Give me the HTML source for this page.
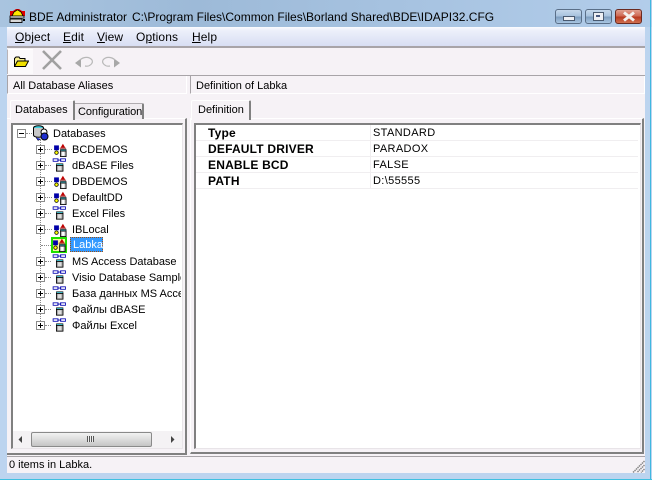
<!DOCTYPE html>
<html><head><meta charset="utf-8"><style>
html,body{margin:0;padding:0}
body{width:652px;height:480px;overflow:hidden;position:relative;font:11px "Liberation Sans","DejaVu Sans",sans-serif;color:#000;background:#bcd4ef}
div,span,svg{position:absolute}
.t{white-space:nowrap;line-height:16px}
.m{font-size:12px;letter-spacing:.1px;line-height:14px}
.tree{left:72px}
.pm{left:36px;width:7px;height:7px;margin-top:1px;border:1px solid #8c8c8c;background:#fff}
.pm:before{content:"";position:absolute;left:1px;top:3px;width:5px;height:1px;background:#000}
.pm.p:after{content:"";position:absolute;left:3px;top:1px;width:1px;height:5px;background:#000}
.dh{height:0;border-top:1px dotted #888}
.b{font-size:12px;font-weight:bold;left:208px;letter-spacing:.2px;line-height:14px}
.v{left:373px;letter-spacing:.35px}
u{text-decoration:underline}
</style></head><body>
<svg width="0" height="0" style="left:0;top:0"><defs>
<g id="a"><rect x="0" y="3" width="6" height="6" fill="#0000a8"/><path d="M8 6 11 1 14 6Z" fill="#c00000"/><rect x="7" y="6" width="8" height="1" fill="#800000"/><circle cx="3" cy="12" r="2.200" fill="#ffff00" stroke="#000" stroke-width="1"/><rect x="8" y="8" width="7" height="2" fill="#50c8d8" stroke="#000" stroke-width=".7"/><rect x="8" y="10" width="7" height="7" fill="#b8b8b8" stroke="#000" stroke-width="1"/><rect x="10" y="11" width="3" height="5" fill="#fff"/></g>
<g id="l"><rect x="0" y="1" width="6" height="3" fill="none" stroke="#0000b0" stroke-width="1"/><rect x="9" y="1" width="6" height="3" fill="none" stroke="#0000b0" stroke-width="1"/><rect x="5" y="2" width="5" height="1" fill="#0000b0"/><rect x="4" y="7" width="8" height="2" fill="#40c0d0" stroke="#000" stroke-width=".7"/><rect x="4" y="9" width="8" height="7" fill="#a8a8a8" stroke="#000" stroke-width="1"/><rect x="6" y="10" width="4" height="5" fill="#ddd"/></g>
</defs></svg>

<!-- frame -->
<div style="left:0;top:0;width:652px;height:27px;background:linear-gradient(90deg,#a9c4df 0,#9dbad8 30%,#a6c2e0 60%,#b2cdea 100%)"></div>
<div style="left:650px;top:0;width:1px;height:480px;background:#40b8e0"></div>
<div style="left:0;top:479px;width:652px;height:1px;background:#40c0e0"></div>

<!-- title -->
<svg style="left:9px;top:8px" width="17" height="16" viewBox="0 0 17 16"><path d="M1 3h3l3-2h3l3 2h3v5H1Z" fill="#e00000"/><path d="M3 8 5 4 8 2h1l3 2 2 4Z" fill="#ffe800" stroke="#000" stroke-width=".8"/><rect x="1" y="8" width="14" height="2" fill="#fff" stroke="#000" stroke-width=".8"/><rect x="1" y="11" width="12" height="3.500" fill="#d8d8d8" stroke="#000" stroke-width=".9"/><rect x="14" y="11" width="2" height="2" fill="#000"/></svg>
<div class="t" style="left:29px;top:10px;font-size:12px;line-height:14px">BDE Administrator</div>
<div class="t" style="left:132px;top:10px;font-size:12px;line-height:14px">C:\Program Files\Common Files\Borland Shared\BDE\IDAPI32.CFG</div>

<!-- caption buttons -->
<div style="left:555px;top:9px;width:25px;height:13px;border:1px solid #5a6f88;border-radius:3px;background:linear-gradient(#c5d8ec 0,#a9c3de 45%,#7f9fc0 55%,#a9c6e2 100%)"></div>
<div style="left:563px;top:16px;width:10px;height:3px;border:1px solid #4a5a70;background:#eef0f4"></div>
<div style="left:585px;top:9px;width:25px;height:13px;border:1px solid #5a6f88;border-radius:3px;background:linear-gradient(#c5d8ec 0,#a9c3de 45%,#7f9fc0 55%,#a9c6e2 100%)"></div>
<div style="left:593px;top:12px;width:9px;height:7px;border:1px solid #4a5a70;background:#eef0f4"></div>
<div style="left:596px;top:15px;width:4px;height:2px;background:#4a5a80"></div>
<div style="left:615px;top:9px;width:25px;height:13px;border:1px solid #6a2a20;border-radius:3px;background:linear-gradient(#e0a090 0,#cf6a55 45%,#b83a20 55%,#d07050 100%)"></div>
<svg style="left:622px;top:11px" width="14" height="11" viewBox="0 0 14 11"><path d="M2 1.500 12 9.500M12 1.500 2 9.500" stroke="#f4f0ee" stroke-width="3"/></svg>

<!-- client -->
<div style="left:7px;top:27px;width:638px;height:446px;background:#f6f2f6"></div>

<!-- menu -->
<div style="left:7px;top:27px;width:638px;height:19px;background:linear-gradient(#fbfbff 0,#eceffa 20%,#d8def3 100%)"></div>
<div style="left:7px;top:46px;width:638px;height:2px;background:#a8a4a8"></div>
<div class="t m" style="left:15px;top:30px"><u>O</u>bject</div>
<div class="t m" style="left:63px;top:30px"><u>E</u>dit</div>
<div class="t m" style="left:97px;top:30px"><u>V</u>iew</div>
<div class="t m" style="left:136px;top:30px">O<u>p</u>tions</div>
<div class="t m" style="left:192px;top:30px"><u>H</u>elp</div>

<!-- toolbar -->
<div style="left:7px;top:49px;width:25px;height:24px;background:#fbf9fb;border-left:1px solid #b8b4b8;border-top:1px solid #fff"></div>
<svg style="left:14px;top:56px" width="15" height="12" viewBox="0 0 15 12"><path d="M.5 10.500V2.500L2 1h3l1 1.500h5V5" fill="#f8f090" stroke="#000"/><path d="M.5 10.500 3.500 5H14.500L11.500 10.500Z" fill="#f0e000" stroke="#000"/></svg>
<svg style="left:41px;top:50px" width="22" height="20" viewBox="0 0 22 20"><path d="M2 1 20 19M20 1 2 19" stroke="#a0a0a0" stroke-width="2.600"/></svg>
<svg style="left:74px;top:55px" width="20" height="14" viewBox="0 0 20 14"><path d="M1 8 7 3.500V12.500Z" fill="#a8a8a8"/><path d="M6 5C9 2 15 1 18 5 19.500 8 16 12 11 11" fill="none" stroke="#b8b8b8" stroke-width="1.200"/></svg>
<svg style="left:101px;top:55px" width="20" height="14" viewBox="0 0 20 14"><path d="M19 8 13 3.500V12.500Z" fill="#a8a8a8"/><path d="M14 5C11 2 5 1 2 5 .5 8 4 12 9 11" fill="none" stroke="#b8b8b8" stroke-width="1.200"/></svg>
<div style="left:7px;top:75px;width:638px;height:1px;background:#a8a4a8"></div>

<!-- headers -->
<div style="left:7px;top:76px;width:178px;height:17px;border-right:1px solid #fff;border-bottom:1px solid #fff;border-left:1px solid #a8a4a8"></div>
<div class="t" style="left:13px;top:78px">All Database Aliases</div>
<div style="left:190px;top:76px;width:453px;height:17px;border-right:1px solid #fff;border-bottom:1px solid #fff;border-left:1px solid #a8a4a8"></div>
<div class="t" style="left:196px;top:78px">Definition of Labka</div>

<!-- tabs left -->
<div style="left:7px;top:118px;width:178px;height:334px;border-top:1px solid #fff;border-right:2px solid #808080;border-bottom:2px solid #808080;box-sizing:content-box"></div>
<div style="left:73px;top:103px;width:71px;height:16px;border:1px solid #b0acb0;border-bottom:0;border-right:2px solid #808080;background:#f0ecf0;border-radius:2px 2px 0 0;box-sizing:border-box"></div>
<div class="t" style="left:78px;top:104px;letter-spacing:-.1px">Configuration</div>
<div style="left:10px;top:100px;width:62px;height:19px;border-top:1px solid #fff;border-left:1px solid #fff;border-right:2px solid #808080;background:#f6f2f6;border-radius:2px 2px 0 0"></div>
<div class="t" style="left:15px;top:102px">Databases</div>

<!-- tree box -->
<div style="left:11px;top:123px;width:172px;height:326px;background:#fff;border-top:2px solid #808080;border-left:2px solid #808080;border-right:1px solid #e8e4e8;border-bottom:1px solid #e8e4e8;box-sizing:border-box"></div>

<!-- tree lines -->
<div style="left:40px;top:140px;width:0;height:185px;border-left:1px dotted #888"></div>
<div class="pm" style="left:17px;top:128px"></div>
<div class="dh" style="left:26px;top:133px;width:6px"></div>
<svg style="left:32px;top:125px" width="17" height="16" viewBox="0 0 17 16"><ellipse cx="6.500" cy="3" rx="5" ry="2.300" fill="#40d0e0" stroke="#000"/><path d="M1.500 3V10C1.500 13 11.500 13 11.500 10V3" fill="#c8c8c8" stroke="#000"/><circle cx="12" cy="7" r="3" fill="#fff" stroke="#000"/><circle cx="12.500" cy="11.500" r="3.500" fill="#2030d0" stroke="#000"/><path d="M4 12.500 6 15.500 9 14" fill="#2030d0" stroke="#000" stroke-width=".5"/></svg>
<div class="t" style="left:53px;top:126px">Databases</div>

<div class="pm p" style="top:144px"></div><div class="dh" style="left:45px;top:149px;width:7px"></div><svg style="left:54px;top:143px" width="13" height="14" viewBox="0 0 16 17.500"><use href="#a"/></svg><div class="t tree" style="top:142px">BCDEMOS</div>
<div class="pm p" style="top:160px"></div><div class="dh" style="left:45px;top:165px;width:6px"></div><svg style="left:52px;top:158px" width="15" height="14" viewBox="0 0 15.500 17"><use href="#l"/></svg><div class="t tree" style="top:158px">dBASE Files</div>
<div class="pm p" style="top:176px"></div><div class="dh" style="left:45px;top:181px;width:7px"></div><svg style="left:54px;top:175px" width="13" height="14" viewBox="0 0 16 17.500"><use href="#a"/></svg><div class="t tree" style="top:174px">DBDEMOS</div>
<div class="pm p" style="top:192px"></div><div class="dh" style="left:45px;top:197px;width:7px"></div><svg style="left:54px;top:191px" width="13" height="14" viewBox="0 0 16 17.500"><use href="#a"/></svg><div class="t tree" style="top:190px">DefaultDD</div>
<div class="pm p" style="top:208px"></div><div class="dh" style="left:45px;top:213px;width:6px"></div><svg style="left:52px;top:206px" width="15" height="14" viewBox="0 0 15.500 17"><use href="#l"/></svg><div class="t tree" style="top:206px">Excel Files</div>
<div class="pm p" style="top:224px"></div><div class="dh" style="left:45px;top:229px;width:7px"></div><svg style="left:54px;top:223px" width="13" height="14" viewBox="0 0 16 17.500"><use href="#a"/></svg><div class="t tree" style="top:222px">IBLocal</div>

<div class="dh" style="left:41px;top:245px;width:10px"></div>
<div style="left:51px;top:237px;width:12px;height:12px;border:2px solid #20e000;background:#f8f8a0"></div>
<svg style="left:53px;top:238px" width="13" height="14" viewBox="0 0 16 17.500"><use href="#a"/></svg>
<div style="left:70px;top:237px;width:33px;height:15px;background:#3399ff;outline:1px dotted #a05010;outline-offset:-1px"></div>
<div class="t" style="left:73px;top:237px;color:#fff">Labka</div>

<div class="pm p" style="top:256px"></div><div class="dh" style="left:45px;top:261px;width:6px"></div><svg style="left:52px;top:254px" width="15" height="14" viewBox="0 0 15.500 17"><use href="#l"/></svg><div class="t tree" style="top:254px">MS Access Database</div>
<div class="pm p" style="top:272px"></div><div class="dh" style="left:45px;top:277px;width:6px"></div><svg style="left:52px;top:270px" width="15" height="14" viewBox="0 0 15.500 17"><use href="#l"/></svg><div class="t tree" style="top:270px;width:109px;overflow:hidden">Visio Database Samples</div>
<div class="pm p" style="top:288px"></div><div class="dh" style="left:45px;top:293px;width:6px"></div><svg style="left:52px;top:286px" width="15" height="14" viewBox="0 0 15.500 17"><use href="#l"/></svg><div class="t tree" style="top:286px;width:109px;overflow:hidden">База данных MS Access</div>
<div class="pm p" style="top:304px"></div><div class="dh" style="left:45px;top:309px;width:6px"></div><svg style="left:52px;top:302px" width="15" height="14" viewBox="0 0 15.500 17"><use href="#l"/></svg><div class="t tree" style="top:302px">Файлы dBASE</div>
<div class="pm p" style="top:320px"></div><div class="dh" style="left:45px;top:325px;width:6px"></div><svg style="left:52px;top:318px" width="15" height="14" viewBox="0 0 15.500 17"><use href="#l"/></svg><div class="t tree" style="top:318px">Файлы Excel</div>

<!-- scrollbar -->
<div style="left:13px;top:431px;width:169px;height:17px;background:#f4f2f4"></div>
<div style="left:31px;top:432px;width:119px;height:13px;border:1px solid #8a8a8a;border-radius:2px;background:linear-gradient(#f2f2f2,#dcdcdc 50%,#c4c4c4)"></div>
<div style="left:87px;top:436px;width:7px;height:6px;background:repeating-linear-gradient(90deg,#555 0 1px,#eee 1px 2px)"></div>
<svg style="left:18px;top:435px" width="6" height="9"><path d="M4 1V8L.5 4.500Z" fill="#444"/></svg>
<svg style="left:170px;top:435px" width="6" height="9"><path d="M1 1V8L4.500 4.500Z" fill="#444"/></svg>

<!-- right tab -->
<div style="left:190px;top:118px;width:454px;height:336px;border-top:1px solid #fff;border-left:1px solid #fff;border-right:2px solid #808080;border-bottom:2px solid #808080;box-sizing:border-box"></div>
<div style="left:191px;top:100px;width:57px;height:19px;border-top:1px solid #fff;border-left:1px solid #fff;border-right:2px solid #808080;background:#f6f2f6;border-radius:2px 2px 0 0"></div>
<div class="t" style="left:198px;top:102px">Definition</div>

<div style="left:194px;top:123px;width:447px;height:326px;background:#fff;border-top:2px solid #808080;border-left:2px solid #808080;border-right:1px solid #e8e4e8;border-bottom:1px solid #e8e4e8;box-sizing:border-box"></div>
<div style="left:196px;top:140px;width:442px;height:1px;background:#f0eef0"></div>
<div style="left:196px;top:156px;width:442px;height:1px;background:#f0eef0"></div>
<div style="left:196px;top:172px;width:442px;height:1px;background:#f0eef0"></div>
<div style="left:196px;top:188px;width:442px;height:1px;background:#f0eef0"></div>
<div style="left:370px;top:125px;width:1px;height:64px;background:#f0eef0"></div>
<div class="t b" style="top:126px">Type</div><div class="t v" style="top:125px">STANDARD</div>
<div class="t b" style="top:142px">DEFAULT DRIVER</div><div class="t v" style="top:141px">PARADOX</div>
<div class="t b" style="top:158px">ENABLE BCD</div><div class="t v" style="top:157px">FALSE</div>
<div class="t b" style="top:174px">PATH</div><div class="t v" style="top:173px">D:\55555</div>

<!-- status -->
<div style="left:7px;top:456px;width:638px;height:1px;background:#a8a4a8"></div>
<div class="t" style="left:9px;top:457px">0 items in Labka.</div>
<svg style="left:632px;top:460px" width="13" height="13"><path d="M12.500 1 1 12.500M12.500 5 5 12.500M12.500 9 9 12.500" stroke="#8a8a8a" stroke-width="1.500" stroke-dasharray="1.500 .6"/></svg>
</body></html>
